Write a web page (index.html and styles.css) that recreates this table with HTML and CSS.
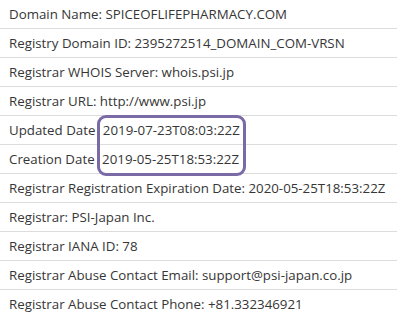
FILE: index.html
```html
<!DOCTYPE html>
<html>
<head>
<meta charset="utf-8">
<link rel="stylesheet" href="styles.css">
</head>
<body>
<div class="whois">
  <ul class="records">
    <li>Domain Name: SPICEOFLIFEPHARMACY.COM</li>
    <li>Registry Domain ID: 2395272514_DOMAIN_COM-VRSN</li>
    <li>Registrar WHOIS Server: whois.psi.jp</li>
    <li>Registrar URL: http://www.psi.jp</li>
    <li>Updated Date <span class="date">2019-07-23T08:03:22Z</span></li>
    <li>Creation Date <span class="date">2019-05-25T18:53:22Z</span></li>
    <li>Registrar Registration Expiration Date: 2020-05-25T18:53:22Z</li>
    <li>Registrar: PSI-Japan Inc.</li>
    <li>Registrar IANA ID: 78</li>
    <li>Registrar Abuse Contact Email: support@psi-japan.co.jp</li>
    <li>Registrar Abuse Contact Phone: +81.332346921</li>
  </ul>
  <div class="highlight"></div>
</div>
</body>
</html>
```
FILE: styles.css
```css
html, body {
  margin: 0;
  padding: 0;
  background: #fff;
}

.whois {
  position: relative;
  width: 397px;
  height: 318px;
  overflow: hidden;
}

.records {
  list-style: none;
  margin: 0;
  padding: 0;
  font-family: "Open Sans", "Liberation Sans", sans-serif;
  font-size: 13.3px;
  color: #363636;
}

.records li {
  height: 28px;
  line-height: 28px;
  padding-left: 9px;
  border-bottom: 1px solid #dcdcdc;
  white-space: nowrap;
}

.date {
  margin-left: 4px;
}

/* rounded marker drawn around the two date values */
.highlight {
  position: absolute;
  left: 97px;
  top: 115px;
  width: 143px;
  height: 55px;
  border: 3px solid #7a6aa6;
  border-radius: 9px;
}
```
